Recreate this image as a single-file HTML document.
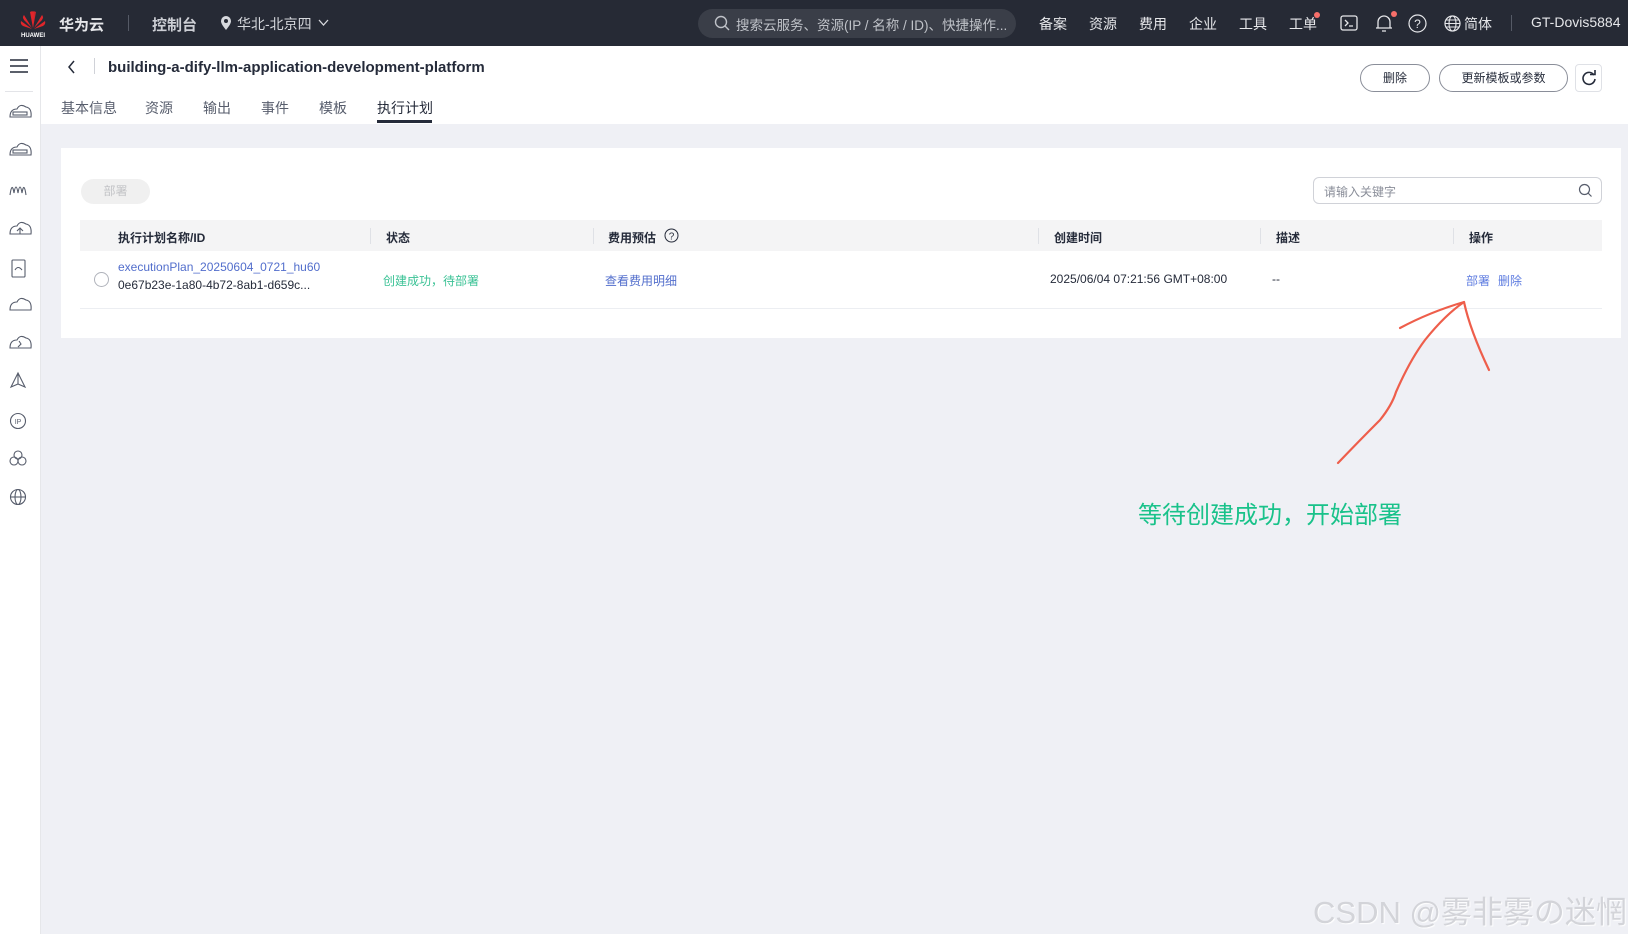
<!DOCTYPE html>
<html><head><meta charset="utf-8"><style>
*{margin:0;padding:0;box-sizing:border-box}
body{width:1628px;height:934px;overflow:hidden;background:#eff0f5;font-family:"Liberation Sans","Noto Sans CJK SC",sans-serif;position:relative;color:#252b3a}
.abs{position:absolute}
#top{left:0;top:0;width:1628px;height:46px;background:#262a35;color:#fff}
#top .t{position:absolute;top:14px;font-size:14px;color:#e6e7ea;white-space:nowrap}
#side{left:0;top:46px;width:41px;height:888px;background:#fff;border-right:1px solid #e6e7ea}
#head{left:41px;top:46px;width:1587px;height:78px;background:#fff}
.tab{position:absolute;top:52px;font-size:14px;color:#575d6c}
.btn{position:absolute;border:1px solid #8a8e99;border-radius:16px;background:#fff;font-size:12px;text-align:center;line-height:28px;color:#252b3a}
#card{left:61px;top:148px;width:1560px;height:190px;background:#fff}
.th{position:absolute;top:9px;font-size:12px;font-weight:bold;color:#252b3a}
.sep{position:absolute;top:8px;width:1px;height:16px;background:#dfe1e6}
.td{position:absolute;font-size:12px}
.ic{position:absolute;left:9px}
</style></head><body>
<div id="top" class="abs">
 <svg class="abs" style="left:19px;top:8px" width="28" height="30" viewBox="0 0 28 30"><g fill="#e0262b"><path d="M14 20 L11 4 Q14 2 15 5Z"/><path d="M14 20 L17 4 Q14 2 13 5Z" opacity=".9"/><path d="M13 20 L5 7 Q3 9 5 12Z"/><path d="M15 20 L23 7 Q25 9 23 12Z"/><path d="M13 21 L2 13 Q1 16 4 18Z"/><path d="M15 21 L26 13 Q27 16 24 18Z"/></g><text x="14" y="29" font-size="6" fill="#fff" text-anchor="middle" font-family="Liberation Sans" font-weight="bold">HUAWEI</text></svg>
 <div class="t" style="left:59px;font-weight:bold;font-size:15px">华为云</div>
 <div class="abs" style="left:128px;top:15px;width:1px;height:16px;background:#555a66"></div>
 <div class="t" style="left:152px;font-weight:bold;font-size:15px;color:#ccced4">控制台</div>
 <svg class="abs" style="left:220px;top:16px" width="12" height="15" viewBox="0 0 12 15"><path d="M6 14 C2 9 1 7 1 5 A5 5 0 0 1 11 5 C11 7 10 9 6 14Z" fill="#d6d8dd"/><circle cx="6" cy="5" r="2" fill="#262a35"/></svg>
 <div class="t" style="left:237px;font-size:14px;color:#d6d8dd">华北-北京四</div>
 <svg class="abs" style="left:318px;top:19px" width="11" height="8"><path d="M1 1 L5.5 6 L10 1" stroke="#d6d8dd" fill="none" stroke-width="1.3"/></svg>
 <div class="abs" style="left:698px;top:9px;width:318px;height:29px;border-radius:15px;background:#3a3e48"></div>
 <svg class="abs" style="left:714px;top:15px" width="16" height="16"><circle cx="7" cy="7" r="5.5" stroke="#bfc2c8" fill="none" stroke-width="1.4"/><path d="M11 11 L15 15" stroke="#bfc2c8" stroke-width="1.4"/></svg>
 <div class="t" style="left:736px;font-size:13.5px;color:#bfc2c8">搜索云服务、资源(IP / 名称 / ID)、快捷操作...</div>
 <div class="t" style="left:1039px">备案</div>
 <div class="t" style="left:1089px">资源</div>
 <div class="t" style="left:1139px">费用</div>
 <div class="t" style="left:1189px">企业</div>
 <div class="t" style="left:1239px">工具</div>
 <div class="t" style="left:1289px">工单</div>
 <div class="abs" style="left:1314px;top:12px;width:6px;height:6px;border-radius:3px;background:#f66f6a"></div>
 <svg class="abs" style="left:1340px;top:15px" width="18" height="16"><rect x="1" y="1" width="16" height="14" rx="2" stroke="#e6e7ea" fill="none" stroke-width="1.3"/><path d="M5 5 L8 8 L5 11 M9 11 H13" stroke="#e6e7ea" fill="none" stroke-width="1.3"/></svg>
 <svg class="abs" style="left:1375px;top:13px" width="18" height="20"><path d="M3 15 V9 A6 6 0 0 1 15 9 V15 Z M1 15 H17 M7 18 H11" stroke="#e6e7ea" fill="none" stroke-width="1.3"/></svg>
 <div class="abs" style="left:1391px;top:11px;width:6px;height:6px;border-radius:3px;background:#f66f6a"></div>
 <svg class="abs" style="left:1408px;top:14px" width="19" height="19"><circle cx="9.5" cy="9.5" r="8.5" stroke="#e6e7ea" fill="none" stroke-width="1.2"/><text x="9.5" y="14" font-size="12" text-anchor="middle" fill="#e6e7ea" font-family="Liberation Sans">?</text></svg>
 <svg class="abs" style="left:1444px;top:15px" width="17" height="17"><circle cx="8.5" cy="8.5" r="7.5" stroke="#e6e7ea" fill="none" stroke-width="1.2"/><ellipse cx="8.5" cy="8.5" rx="3.5" ry="7.5" stroke="#e6e7ea" fill="none" stroke-width="1.1"/><path d="M1 8.5 H16 M2.5 5 H14.5 M2.5 12 H14.5" stroke="#e6e7ea" stroke-width="1"/></svg>
 <div class="t" style="left:1464px">简体</div>
 <div class="abs" style="left:1511px;top:15px;width:1px;height:16px;background:#555a66"></div>
 <div class="t" style="left:1531px;font-size:14px">GT-Dovis5884</div>
</div>
<div id="side" class="abs">
 <svg class="ic" style="top:12px" width="20" height="16"><path d="M1 2H19M1 8H19M1 14H19" stroke="#252b3a" stroke-width="1.6"/></svg>
 <div class="abs" style="left:5px;top:45px;width:28px;height:1px;background:#e3e4e8"></div>
 <svg class="abs" style="left:0;top:5px" width="41" height="460" fill="none" stroke="#575d6c" stroke-width="1.1">
  <path d="M10 66 Q10 58 17 58 Q20 52 26 56 Q32 57 31 66 Z"/><rect x="13" y="61" width="14" height="3"/>
  <path d="M10 104 Q10 96 17 96 Q20 90 26 94 Q32 95 31 104 Z"/><rect x="13" y="99" width="14" height="3"/>
  <path d="M10 144 Q12 130 14 142 Q16 130 18 142 Q20 130 22 142 Q24 130 26 144"/>
  <path d="M10 183 Q10 175 17 175 Q20 169 26 173 Q32 174 31 183 Z M20 183 V177 M17 180 L20 177 L23 180"/>
  <rect x="12" y="209" width="13" height="17" rx="1"/><path d="M15 219 Q18 214 22 219"/>
  <path d="M10 259 Q10 251 17 251 Q20 245 26 249 Q32 250 31 259 Z"/>
  <path d="M10 297 Q10 289 17 289 Q20 283 26 287 Q32 288 31 297 Z M19 290 L21 293 L18 296"/>
  <path d="M18 322 L11 336 L18 333 L25 336 Z M18 322 V333"/>
  <circle cx="18" cy="370" r="7.5"/><text x="18" y="373" font-size="7" fill="#575d6c" stroke="none" text-anchor="middle" font-family="Liberation Sans">IP</text>
  <circle cx="18" cy="404" r="4"/><circle cx="14" cy="410" r="4"/><circle cx="22" cy="410" r="4"/>
  <circle cx="18" cy="446" r="7.5"/><ellipse cx="18" cy="446" rx="3" ry="7.5"/><path d="M10.5 446 H25.5"/>
 </svg>
</div>
<div id="head" class="abs">
 <svg class="abs" style="left:26px;top:14px" width="10" height="14"><path d="M7 1 L2 7 L7 13" stroke="#252b3a" fill="none" stroke-width="1.5"/></svg>
 <div class="abs" style="left:53px;top:12px;width:1px;height:16px;background:#d0d2d8"></div>
 <div class="abs" style="left:67px;top:13px;font-size:15px;font-weight:bold">building-a-dify-llm-application-development-platform</div>
 <div class="tab" style="left:20px">基本信息</div>
 <div class="tab" style="left:104px">资源</div>
 <div class="tab" style="left:162px">输出</div>
 <div class="tab" style="left:220px">事件</div>
 <div class="tab" style="left:278px">模板</div>
 <div class="tab" style="left:336px;color:#252b3a">执行计划</div>
 <div class="abs" style="left:336px;top:74px;width:55px;height:3px;background:#252b3a"></div>
 <div class="btn" style="left:1319px;top:18px;width:70px;height:28px;line-height:26px">删除</div>
 <div class="btn" style="left:1398px;top:18px;width:129px;height:28px;line-height:26px">更新模板或参数</div>
 <div class="abs" style="left:1534px;top:18px;width:27px;height:28px;border:1px solid #dfe1e6;border-radius:4px;background:#fff"></div>
 <svg class="abs" style="left:1540px;top:24px" width="16" height="16"><path d="M13 5 A6 6 0 1 0 14 9" stroke="#252b3a" fill="none" stroke-width="1.6"/><path d="M9 4.5 H14 V0" stroke="#252b3a" fill="none" stroke-width="1.6"/></svg>
</div>
<div id="card" class="abs">
 <div class="abs" style="left:20px;top:31px;width:69px;height:25px;border-radius:13px;background:#f0f0f0;color:#c2c3c6;font-size:12px;text-align:center;line-height:25px">部署</div>
 <div class="abs" style="left:1252px;top:29px;width:289px;height:27px;border:1px solid #d0d2d8;border-radius:6px"></div>
 <div class="abs" style="left:1263px;top:35px;font-size:12px;color:#8a8e99">请输入关键字</div>
 <svg class="abs" style="left:1517px;top:35px" width="15" height="15"><circle cx="6.5" cy="6.5" r="5" stroke="#575d6c" fill="none" stroke-width="1.2"/><path d="M10 10 L13.5 13.5" stroke="#575d6c" stroke-width="1.2"/></svg>
 <div class="abs" style="left:19px;top:72px;width:1522px;height:31px;background:#f4f4f5">
  <div class="th" style="left:38px">执行计划名称/ID</div>
  <div class="sep" style="left:290px"></div><div class="th" style="left:306px">状态</div>
  <div class="sep" style="left:513px"></div><div class="th" style="left:528px">费用预估</div>
  <svg class="abs" style="left:584px;top:8px" width="15" height="15"><circle cx="7.5" cy="7.5" r="6.5" stroke="#252b3a" fill="none" stroke-width="1"/><text x="7.5" y="11.5" font-size="10" text-anchor="middle" fill="#252b3a" font-family="Liberation Sans">?</text></svg>
  <div class="sep" style="left:958px"></div><div class="th" style="left:974px">创建时间</div>
  <div class="sep" style="left:1180px"></div><div class="th" style="left:1196px">描述</div>
  <div class="sep" style="left:1373px"></div><div class="th" style="left:1389px">操作</div>
 </div>
 <div class="abs" style="left:33px;top:124px;width:15px;height:15px;border:1px solid #b0b3bb;border-radius:50%"></div>
 <div class="td" style="left:57px;top:112px;color:#526ecc">executionPlan_20250604_0721_hu60</div>
 <div class="td" style="left:57px;top:130px;color:#252b3a">0e67b23e-1a80-4b72-8ab1-d659c...</div>
 <div class="td" style="left:322px;top:124px;color:#3ac295">创建成功，待部署</div>
 <div class="td" style="left:544px;top:124px;color:#526ecc">查看费用明细</div>
 <div class="td" style="left:989px;top:124px;color:#252b3a">2025/06/04 07:21:56 GMT+08:00</div>
 <div class="td" style="left:1211px;top:124px">--</div>
 <div class="td" style="left:1405px;top:124px;color:#5e7ce0">部署</div>
 <div class="td" style="left:1437px;top:124px;color:#5e7ce0">删除</div>
 <div class="abs" style="left:19px;top:160px;width:1522px;height:1px;background:#eceef2"></div>
</div>
<svg class="abs" style="left:0;top:0" width="1628" height="934" fill="none" stroke="#ee5e4b" stroke-width="2.2" stroke-linecap="round" stroke-linejoin="round">
 <path d="M1338 463 Q1360 440 1380 420 Q1392 405 1396 392 Q1410 360 1425 340 Q1445 315 1464 302"/>
 <path d="M1400 328 Q1430 312 1464 302 Q1470 330 1489 370"/>
</svg>
<div class="abs" style="left:1138px;top:495px;font-size:24px;color:#19c28a;white-space:nowrap">等待创建成功，开始部署</div>
<div class="abs" style="left:1313px;top:887px;font-size:31px;color:#d3d4d9;white-space:nowrap;text-shadow:1px 1px 1px #fff">CSDN @雾非雾の迷惘</div>
</body></html>
